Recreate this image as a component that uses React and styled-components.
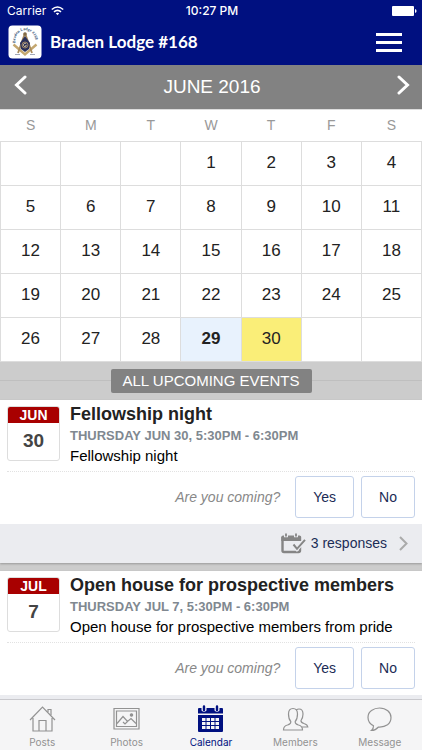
import React, { useState } from 'react';
import styled, { createGlobalStyle } from 'styled-components';

const GlobalStyle = createGlobalStyle`
  * {
    box-sizing: border-box;
  }
  body {
    margin: 0;
    background: #ccc;
    color: #222;
    font-family: "Liberation Sans", Arial, sans-serif;
  }
  button {
    font-family: inherit;
    cursor: pointer;
  }
`;

const Screen = styled.div`
  display: flex;
  flex-direction: column;
  height: 100vh;
`;

const TopBar = styled.header`
  flex: none;
  background: #001080;
  color: #fff;
`;

const StatusBar = styled.div`
  display: grid;
  grid-template-columns: 1fr auto 1fr;
  align-items: center;
  height: 22px;
  padding: 0 5px 0 7px;
  font: 500 12px/22px Inter, sans-serif;
`;

const Carrier = styled.span`
  display: flex;
  align-items: center;
  gap: 5px;
  font-weight: 400;
`;

const Battery = styled.svg`
  justify-self: end;
`;

const TitleBar = styled.div`
  display: flex;
  align-items: center;
  height: 43px;
  padding: 0 16px 3px 8px;
`;

const LodgeName = styled.h1`
  flex: 1;
  margin: 0 0 0 8px;
  font: 700 17px/24px Lato, sans-serif;
`;

const MenuButton = styled.button`
  display: flex;
  flex-direction: column;
  justify-content: space-between;
  width: 34px;
  height: 19px;
  padding: 0 4px;
  border: 0;
  background: none;

  span {
    width: 26px;
    height: 3px;
    background: #fff;
  }
`;

const Content = styled.main`
  flex: 1;
  min-height: 0;
  overflow-y: auto;
  scrollbar-width: none;
`;

const MonthBar = styled.div`
  display: flex;
  justify-content: space-between;
  align-items: center;
  height: 45px;
  padding: 0 8px 0 10px;
  border-bottom: 1px solid #ddd;
  background: #828282;
  color: #fff;
`;

const MonthName = styled.h2`
  margin: 0;
  font-size: 19px;
  font-weight: 400;
`;

const ArrowButton = styled.button`
  display: flex;
  padding: 0 4px 5px;
  border: 0;
  background: none;
  color: #fff;
`;

const Month = styled.table`
  width: 100%;
  table-layout: fixed;
  border-collapse: collapse;
  background: #fff;
`;

const Weekday = styled.th`
  height: 31px;
  padding: 0;
  color: #999;
  font-size: 14px;
  font-weight: 400;
`;

const Day = styled.td`
  height: 44px;
  padding: 0;
  border: 1px solid #ddd;
  background: ${props => props.$background || '#fff'};
  font-size: 17px;
  font-weight: ${props => (props.$today ? 700 : 400)};
  text-align: center;
`;

const ListHeading = styled.div`
  display: flex;
  align-items: center;
  height: 38px;
  background: #ccc;

  &::before,
  &::after {
    content: '';
    flex: 1;
    height: 1px;
    background: #bfbfbf;
  }
`;

const AllEvents = styled.button`
  height: 24px;
  padding: 0 12px;
  border: 0;
  border-radius: 2px;
  background: #828282;
  color: #fff;
  font-size: 15px;
  line-height: 24px;
`;

const EventCard = styled.article`
  margin-bottom: 8px;
  background: #fff;
  box-shadow: 0 1px 2px #999;
`;

const EventTop = styled.div`
  display: flex;
  gap: 10px;
  height: 72px;
  margin: 0 7px;
  padding-top: 3px;
  border-bottom: 1px dotted #e2e2e2;
`;

const DateTile = styled.div`
  flex: none;
  width: 53px;
  height: 55px;
  margin-top: 3px;
  border: 1px solid #ddd;
  border-radius: 3px;
  overflow: hidden;
  color: #444;
  font-size: 19px;
  font-weight: 700;
  line-height: 36px;
  text-align: center;
`;

const TileMonth = styled.div`
  background: #a80000;
  color: #fff;
  font-size: 14px;
  line-height: 16px;
`;

const EventTitle = styled.h3`
  margin: 0;
  font-size: 18px;
  line-height: 22px;
`;

const EventTime = styled.div`
  color: #808890;
  font-size: 13px;
  font-weight: 700;
  line-height: 21px;
`;

const EventText = styled.p`
  margin: 0;
  color: #000;
  font-size: 15px;
  line-height: 19px;
`;

const Rsvp = styled.div`
  display: flex;
  align-items: center;
  justify-content: flex-end;
  height: 52px;
  padding: 0 7px 2px;
`;

const Question = styled.span`
  margin-right: 15px;
  color: #888;
  font-size: 14px;
  font-style: italic;
`;

const Answer = styled.button`
  height: 42px;
  margin-left: 7px;
  padding: 0 17px;
  border: 1px solid #c4d2ea;
  border-radius: 3px;
  background: #fff;
  color: #1b2c56;
  font-size: 14px;

  &:first-of-type {
    margin-left: 0;
  }
`;

const Responses = styled.button`
  display: flex;
  align-items: center;
  justify-content: flex-end;
  width: 100%;
  height: 39px;
  padding: 0 14px;
  border: 0;
  background: #ebecf0;
  color: #1b2c56;
  font-size: 14px;
`;

const ResponsesLabel = styled.span`
  margin: 0 12px 0 5px;
`;

const TabBar = styled.nav`
  flex: none;
  display: grid;
  grid-template-columns: repeat(5, 1fr);
  height: 51px;
  border-top: 1px solid #c9c9cd;
  background: #f5f5f6;
`;

const Tab = styled.button`
  display: flex;
  flex-direction: column;
  align-items: center;
  gap: 3px;
  padding: 5px 0 0;
  border: 0;
  background: none;
  color: ${props => (props.$active ? '#001080' : '#929292')};
  font: 400 10px/12px Inter, sans-serif;
`;

const Logo = () => (
  <svg width="34" height="34" viewBox="0 0 34 34" role="img" aria-label="Lodge emblem">
    <rect x="0.5" y="0.5" width="33" height="33" rx="4" fill="#fff" />
    <path id="arc" d="M7.5 18 A 10 10.5 0 1 1 27 18" fill="none" />
    <text fontFamily="Liberation Serif, serif" fontSize="4" fontWeight="700" fill="#2c4a70">
      <textPath href="#arc">Braden Lodge #168</textPath>
    </text>
    <path d="M5.5 19.5 L17 29.5 L28.5 19.5" fill="none" stroke="#c4a76f" strokeWidth="2.4" />
    <path d="M17 8 L10 28 M17 8 L24 28" fill="none" stroke="#a98c5c" strokeWidth="1.8" />
    <circle cx="17" cy="9" r="1.8" fill="#826b47" />
    <path d="M17 11 L22 18 L21 24 L17 27 L13 24 L12 18 Z" fill="#29305b" />
    <circle cx="17" cy="20" r="3" fill="none" stroke="#b49665" strokeWidth="0.8" />
    <path d="M18.3 18.8 A1.7 1.7 0 1 0 18.5 20.8 H17" fill="none" stroke="#e6d2a2" strokeWidth="0.8" />
    <path d="M7 29.5 H12 M22 29.5 H27" stroke="#8b93a8" strokeWidth="0.8" />
  </svg>
);

const Wifi = () => (
  <svg width="13" height="10" viewBox="0 0 13 10" fill="none" stroke="#fff" strokeWidth="1.6" aria-hidden="true">
    <path d="M0.8 3.5 Q6.5 -1.5 12.2 3.5" />
    <path d="M3 5.8 Q6.5 2.8 10 5.8" />
    <path d="M4.8 7.3 Q6.5 6 8.2 7.3 L6.5 9.2 Z" fill="#fff" stroke="none" />
  </svg>
);

const Arrow = ({ right }) => (
  <svg width="13" height="20" viewBox="0 0 13 20" fill="none" stroke="currentColor" strokeWidth="3" aria-hidden="true">
    <path d={right ? 'M2 2 L10.5 10 L2 18' : 'M11 2 L2.5 10 L11 18'} strokeLinecap="round" />
  </svg>
);

const ResponsesIcon = () => (
  <svg width="25" height="21" viewBox="0 0 25 21" fill="none" stroke="#858585" aria-hidden="true">
    <path d="M19 14 V17.5 Q19 19 17.5 19 H3 Q1.5 19 1.5 17.5 V4" strokeWidth="2.4" />
    <path d="M0.3 8 V4 Q0.3 2.5 2 2.5 H3 V4.3 H7 V2.5 H13 V4.3 H17 V2.5 H18.5 Q20.2 2.5 20.2 4 V8 Z" fill="#858585" stroke="none" />
    <path d="M5 0.5 V3.5 M15 0.5 V3.5" strokeWidth="1.8" />
    <path d="M12.5 11.5 L16 15.8 L24 6.8" stroke="#ebecf0" strokeWidth="4" />
    <path d="M12.5 11.5 L16 15.8 L24 6.8" strokeWidth="2" />
  </svg>
);

const Chevron = () => (
  <svg width="9" height="15" viewBox="0 0 9 15" fill="none" stroke="#aaa" strokeWidth="2" aria-hidden="true">
    <path d="M1 1 L7.5 7.5 L1 14" />
  </svg>
);

const tabIcons = {
  Posts: (
    <>
      <path d="M1 15 L13.5 2 L26 15 M4 13 V26 H23 V13 M10 26 V15.5 H17 V26" />
      <path d="M19 7 V4.5 H22 V10" />
    </>
  ),
  Photos: (
    <>
      <path d="M1 3.5 H26 V24 H1 Z M3.5 6 H23.5 V21.5 H3.5 Z" />
      <path d="M4 18.5 L10 11.5 L14.5 16.5 L18 13.5 L23 18.5 M10 17 L12 19 L14.5 16.5" />
      <circle cx="18.5" cy="10" r="1.2" fill="currentColor" />
    </>
  ),
  Calendar: (
    <>
      <path
        fill="currentColor"
        stroke="none"
        d="M1 4 Q1 3 2 3 H4.5 V5.5 Q7 8 9.5 5.5 V3 H17.5 V5.5 Q20 8 22.5 5.5 V3 H25 Q26 3 26 4 V8.5 H1 Z M1 10 H26 V26 Q26 27 25 27 H2 Q1 27 1 26 Z"
      />
      <path d="M7 1.5 V5 M20 1.5 V5" strokeWidth="2.4" strokeLinecap="round" />
      <path d="M5 14.5 H22 M5 18.5 H22 M5 22.5 H22" stroke="#f5f5f6" strokeWidth="3" strokeDasharray="3.5 1" />
    </>
  ),
  Members: (
    <>
      <path d="M1.5 25 Q1.5 21 5.5 20 Q9 19 8.8 16.5 Q6.5 14 6.5 9 Q6.5 3.5 11 3.5 Q15.5 3.5 15.5 9 Q15.5 14 13.2 16.5 Q13 19 16.5 20 Q20.5 21 20.5 25 Z" />
      <path d="M14.2 5 Q15.5 4 17 4 Q21 4 21 9 Q21 13 19 15.5 Q18.8 17.5 22 18.5 Q25.5 19.5 25.8 22 H20" />
    </>
  ),
  Message: (
    <path d="M5.5 25.5 Q7.5 24 7.5 20.8 Q2 18 2 12.5 Q2 7.8 5.5 5.5 Q9 3 13.5 3 Q18.5 3 21.8 5.8 Q25 8.5 25 12.5 Q25 17 21.5 19.8 Q18 22.3 12.5 22 Q9.5 25.5 5.5 25.5 Z" />
  ),
};

const weekdays = ['S', 'M', 'T', 'W', 'T', 'F', 'S'];

// June 2016 starts on a Wednesday
const weeks = [0, 1, 2, 3, 4].map(week =>
  weekdays.map((_, i) => {
    const day = week * 7 + i - 2;
    return day > 0 && day <= 30 ? day : null;
  })
);

const dayColors = { 29: '#e8f2fd', 30: '#faee78' };

const events = [
  {
    id: 1,
    month: 'JUN',
    day: 30,
    title: 'Fellowship night',
    time: 'THURSDAY JUN 30, 5:30PM - 6:30PM',
    text: 'Fellowship night',
    responses: '3 responses',
  },
  {
    id: 2,
    month: 'JUL',
    day: 7,
    title: 'Open house for prospective members',
    time: 'THURSDAY JUL 7, 5:30PM - 6:30PM',
    text: 'Open house for prospective members from pride',
    responses: '',
  },
];

const Event = ({ event }) => (
  <EventCard>
    <EventTop>
      <DateTile>
        <TileMonth>{event.month}</TileMonth>
        {event.day}
      </DateTile>
      <div>
        <EventTitle>{event.title}</EventTitle>
        <EventTime>{event.time}</EventTime>
        <EventText>{event.text}</EventText>
      </div>
    </EventTop>
    <Rsvp>
      <Question>Are you coming?</Question>
      <Answer>Yes</Answer>
      <Answer>No</Answer>
    </Rsvp>
    <Responses aria-label="Responses">
      {event.responses && (
        <>
          <ResponsesIcon />
          <ResponsesLabel>{event.responses}</ResponsesLabel>
          <Chevron />
        </>
      )}
    </Responses>
  </EventCard>
);

const App = () => {
  const [tab, setTab] = useState('Calendar');

  return (
    <Screen>
      <GlobalStyle />
      <TopBar>
        <StatusBar>
          <Carrier>Carrier <Wifi /></Carrier>
          <span>10:27 PM</span>
          <Battery width="25" height="10" viewBox="0 0 25 10" fill="#fff" aria-hidden="true">
            <rect width="22" height="10" rx="1" />
            <path d="M23 3 Q24.6 3.5 24.6 5 Q24.6 6.5 23 7 Z" />
          </Battery>
        </StatusBar>
        <TitleBar>
          <Logo />
          <LodgeName>Braden Lodge #168</LodgeName>
          <MenuButton aria-label="Menu">
            <span />
            <span />
            <span />
          </MenuButton>
        </TitleBar>
      </TopBar>
      <Content>
        <MonthBar>
          <ArrowButton aria-label="Previous month"><Arrow /></ArrowButton>
          <MonthName>JUNE 2016</MonthName>
          <ArrowButton aria-label="Next month"><Arrow right /></ArrowButton>
        </MonthBar>
        <Month>
          <thead>
            <tr>{weekdays.map((name, i) => <Weekday key={i}>{name}</Weekday>)}</tr>
          </thead>
          <tbody>
            {weeks.map((week, i) => (
              <tr key={i}>
                {week.map((day, j) => (
                  <Day key={j} $background={dayColors[day]} $today={day === 29}>{day}</Day>
                ))}
              </tr>
            ))}
          </tbody>
        </Month>
        <ListHeading>
          <AllEvents>ALL UPCOMING EVENTS</AllEvents>
        </ListHeading>
        {events.map(event => <Event key={event.id} event={event} />)}
      </Content>
      <TabBar>
        {Object.keys(tabIcons).map(name => (
          <Tab key={name} $active={tab === name} onClick={() => setTab(name)}>
            <svg width="27" height="28" viewBox="0 0 27 28" fill="none" stroke="currentColor" strokeWidth="1.2" aria-hidden="true">
              {tabIcons[name]}
            </svg>
            {name}
          </Tab>
        ))}
      </TabBar>
    </Screen>
  );
};

export default App;
